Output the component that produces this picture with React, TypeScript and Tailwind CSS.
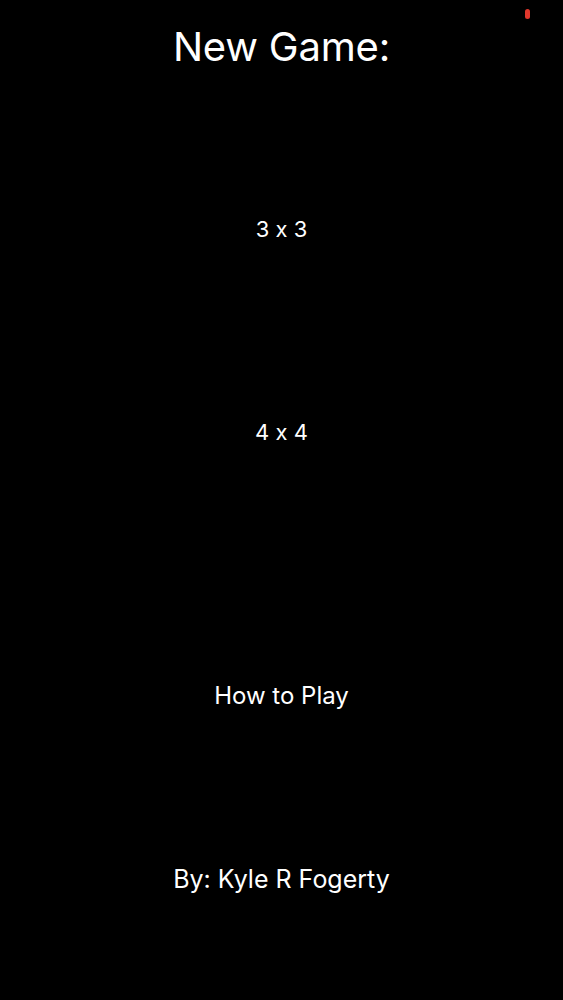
import React from 'react';

export default function App() {
  return (
    <div className="relative h-[1000px] w-full overflow-hidden bg-black text-white font-['Inter','Liberation_Sans',Arial,sans-serif] [font-feature-settings:'calt'_0]">
      <span className="absolute left-[525px] top-[9px] h-[10px] w-[5px] rounded-full bg-[#e0372c]" aria-hidden="true" />
      <div className="flex flex-col items-center leading-none">
        <h1 className="mt-[27px] text-[40px] tracking-[-0.2px]">New Game:</h1>
        <button className="mt-[151px] text-[22px] leading-none">3 x 3</button>
        <button className="mt-[181px] text-[22px] leading-none">4 x 4</button>
        <button className="mt-[241px] text-[24px] leading-none">How to Play</button>
        <p className="mt-[159px] text-[25px]">By: Kyle R Fogerty</p>
      </div>
    </div>
  );
}
